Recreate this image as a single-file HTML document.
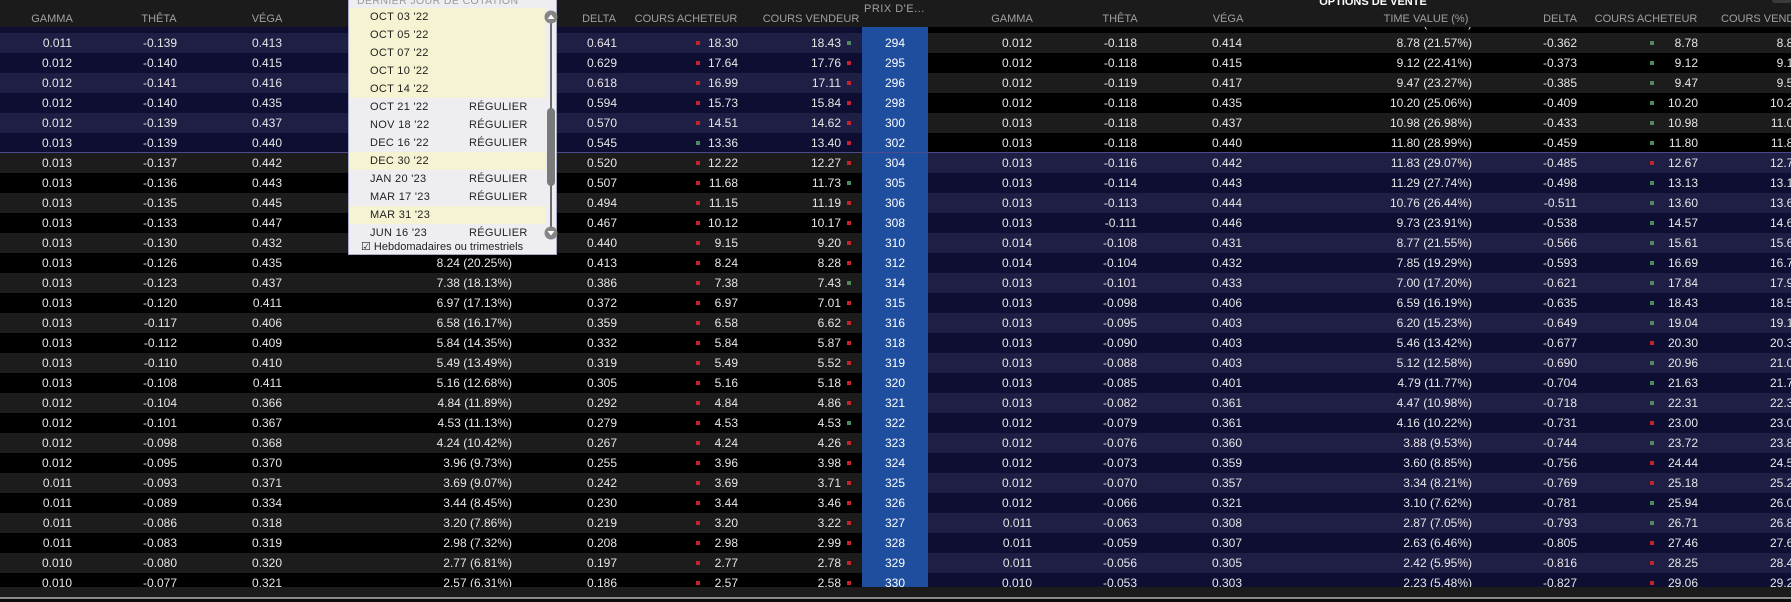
<!DOCTYPE html>
<html><head><meta charset="utf-8"><style>
*{margin:0;padding:0;box-sizing:border-box}
body{width:1791px;height:602px;background:#0a0a0a;overflow:hidden;position:relative;font-family:"Liberation Sans",Arial,sans-serif;color:#e6e6e6}
#rows{position:absolute;left:0;top:0;width:1791px;height:587px;overflow:hidden}
.r{position:absolute;left:0;width:1791px;height:20px;font-size:12px;line-height:20px}
.r span{position:absolute;white-space:nowrap}
.L{position:absolute;left:0;width:862px;height:20px}
.R{position:absolute;left:928px;width:863px;height:20px}
.a{right:1719px}.b{right:1614px}.c{right:1509px}.d{right:1279px}.e{right:1174px}.f{right:1053px}.g{right:950px}
.h{right:759px}.i{right:654px}.j{right:549px}.k{right:319px}.l{right:214px}.m{right:93px}.n{right:-9px}
.s{left:862px;width:66px;text-align:center;background:#1f4e9e;color:#fff}
i{position:absolute;width:4px;height:4px;top:8px}
.x{background:#c4222c}.y{background:#4d8a5e}
.q1{left:696px}.q2{left:847px}.q3{left:1650px}
.nv1{background:#1f1f46}.nv2{background:#0e0e33}.gr1{background:#1c1c1c}.gr2{background:#000}
#hdr{position:absolute;left:0;top:0;width:1791px;height:27px;background:#1b1b1b;z-index:2;font-size:11px;color:#a0a0a0}
#hdr span{position:absolute;top:13px;white-space:nowrap;transform:translateX(-50%)}
#blue{position:absolute;left:862px;top:27px;width:66px;height:560px;background:#1f4e9e}
#sep{position:absolute;left:0;top:152px;width:1791px;height:1px;background:#4a4a8c;z-index:1}
#dd{position:absolute;left:348px;top:-1px;width:209px;height:256px;background:#eeeef2;border:1px solid #a8aac8;z-index:3;color:#222;font-size:11px}
#dd .it{position:absolute;left:0;width:196px;height:18px;line-height:18px}
#dd .it b{font-weight:normal;position:absolute;left:21px;letter-spacing:.3px}
#dd .it u{text-decoration:none;position:absolute;left:120px;letter-spacing:.3px}
.ye{background:#f5f3d2}
</style></head><body>
<div id="rows">
<div id="blue"></div>
<div class="r" style="top:13px"><div class="L nv2"></div><div class="R gr2"></div><span class="a">0.011</span><span class="b">-0.138</span><span class="c">0.412</span><span class="e">0.653</span><span class="f">18.97</span><span class="g">19.11</span><span class="h">0.012</span><span class="i">-0.117</span><span class="j">0.412</span><span class="k">8.45 (20.76%)</span><span class="l">-0.349</span><span class="m">8.45</span></div>
<div class="r" style="top:33px"><div class="L nv1"></div><div class="R gr1"></div><span class="a">0.011</span><span class="b">-0.139</span><span class="c">0.413</span><span class="e">0.641</span><i class="x q1"></i><span class="f">18.30</span><span class="g">18.43</span><i class="y q2"></i><span class="s">294</span><span class="h">0.012</span><span class="i">-0.118</span><span class="j">0.414</span><span class="k">8.78 (21.57%)</span><span class="l">-0.362</span><i class="y q3"></i><span class="m">8.78</span><span class="n">8.83</span></div>
<div class="r" style="top:53px"><div class="L nv2"></div><div class="R gr2"></div><span class="a">0.012</span><span class="b">-0.140</span><span class="c">0.415</span><span class="e">0.629</span><i class="x q1"></i><span class="f">17.64</span><span class="g">17.76</span><i class="x q2"></i><span class="s">295</span><span class="h">0.012</span><span class="i">-0.118</span><span class="j">0.415</span><span class="k">9.12 (22.41%)</span><span class="l">-0.373</span><i class="y q3"></i><span class="m">9.12</span><span class="n">9.17</span></div>
<div class="r" style="top:73px"><div class="L nv1"></div><div class="R gr1"></div><span class="a">0.012</span><span class="b">-0.141</span><span class="c">0.416</span><span class="e">0.618</span><i class="x q1"></i><span class="f">16.99</span><span class="g">17.11</span><i class="x q2"></i><span class="s">296</span><span class="h">0.012</span><span class="i">-0.119</span><span class="j">0.417</span><span class="k">9.47 (23.27%)</span><span class="l">-0.385</span><i class="y q3"></i><span class="m">9.47</span><span class="n">9.52</span></div>
<div class="r" style="top:93px"><div class="L nv2"></div><div class="R gr2"></div><span class="a">0.012</span><span class="b">-0.140</span><span class="c">0.435</span><span class="e">0.594</span><i class="x q1"></i><span class="f">15.73</span><span class="g">15.84</span><i class="x q2"></i><span class="s">298</span><span class="h">0.012</span><span class="i">-0.118</span><span class="j">0.435</span><span class="k">10.20 (25.06%)</span><span class="l">-0.409</span><i class="y q3"></i><span class="m">10.20</span><span class="n">10.26</span></div>
<div class="r" style="top:113px"><div class="L nv1"></div><div class="R gr1"></div><span class="a">0.012</span><span class="b">-0.139</span><span class="c">0.437</span><span class="e">0.570</span><i class="x q1"></i><span class="f">14.51</span><span class="g">14.62</span><i class="x q2"></i><span class="s">300</span><span class="h">0.013</span><span class="i">-0.118</span><span class="j">0.437</span><span class="k">10.98 (26.98%)</span><span class="l">-0.433</span><i class="y q3"></i><span class="m">10.98</span><span class="n">11.04</span></div>
<div class="r" style="top:133px"><div class="L nv2"></div><div class="R gr2"></div><span class="a">0.013</span><span class="b">-0.139</span><span class="c">0.440</span><span class="e">0.545</span><i class="y q1"></i><span class="f">13.36</span><span class="g">13.40</span><i class="x q2"></i><span class="s">302</span><span class="h">0.013</span><span class="i">-0.118</span><span class="j">0.440</span><span class="k">11.80 (28.99%)</span><span class="l">-0.459</span><i class="y q3"></i><span class="m">11.80</span><span class="n">11.86</span></div>
<div class="r" style="top:153px"><div class="L gr1"></div><div class="R nv1"></div><span class="a">0.013</span><span class="b">-0.137</span><span class="c">0.442</span><span class="e">0.520</span><i class="x q1"></i><span class="f">12.22</span><span class="g">12.27</span><i class="x q2"></i><span class="s">304</span><span class="h">0.013</span><span class="i">-0.116</span><span class="j">0.442</span><span class="k">11.83 (29.07%)</span><span class="l">-0.485</span><i class="x q3"></i><span class="m">12.67</span><span class="n">12.73</span></div>
<div class="r" style="top:173px"><div class="L gr2"></div><div class="R nv2"></div><span class="a">0.013</span><span class="b">-0.136</span><span class="c">0.443</span><span class="e">0.507</span><i class="x q1"></i><span class="f">11.68</span><span class="g">11.73</span><i class="y q2"></i><span class="s">305</span><span class="h">0.013</span><span class="i">-0.114</span><span class="j">0.443</span><span class="k">11.29 (27.74%)</span><span class="l">-0.498</span><i class="y q3"></i><span class="m">13.13</span><span class="n">13.19</span></div>
<div class="r" style="top:193px"><div class="L gr1"></div><div class="R nv1"></div><span class="a">0.013</span><span class="b">-0.135</span><span class="c">0.445</span><span class="e">0.494</span><i class="x q1"></i><span class="f">11.15</span><span class="g">11.19</span><i class="x q2"></i><span class="s">306</span><span class="h">0.013</span><span class="i">-0.113</span><span class="j">0.444</span><span class="k">10.76 (26.44%)</span><span class="l">-0.511</span><i class="y q3"></i><span class="m">13.60</span><span class="n">13.66</span></div>
<div class="r" style="top:213px"><div class="L gr2"></div><div class="R nv2"></div><span class="a">0.013</span><span class="b">-0.133</span><span class="c">0.447</span><span class="e">0.467</span><i class="x q1"></i><span class="f">10.12</span><span class="g">10.17</span><i class="x q2"></i><span class="s">308</span><span class="h">0.013</span><span class="i">-0.111</span><span class="j">0.446</span><span class="k">9.73 (23.91%)</span><span class="l">-0.538</span><i class="y q3"></i><span class="m">14.57</span><span class="n">14.63</span></div>
<div class="r" style="top:233px"><div class="L gr1"></div><div class="R nv1"></div><span class="a">0.013</span><span class="b">-0.130</span><span class="c">0.432</span><span class="d">9.15 (22.49%)</span><span class="e">0.440</span><i class="x q1"></i><span class="f">9.15</span><span class="g">9.20</span><i class="x q2"></i><span class="s">310</span><span class="h">0.014</span><span class="i">-0.108</span><span class="j">0.431</span><span class="k">8.77 (21.55%)</span><span class="l">-0.566</span><i class="y q3"></i><span class="m">15.61</span><span class="n">15.67</span></div>
<div class="r" style="top:253px"><div class="L gr2"></div><div class="R nv2"></div><span class="a">0.013</span><span class="b">-0.126</span><span class="c">0.435</span><span class="d">8.24 (20.25%)</span><span class="e">0.413</span><i class="x q1"></i><span class="f">8.24</span><span class="g">8.28</span><i class="x q2"></i><span class="s">312</span><span class="h">0.014</span><span class="i">-0.104</span><span class="j">0.432</span><span class="k">7.85 (19.29%)</span><span class="l">-0.593</span><i class="y q3"></i><span class="m">16.69</span><span class="n">16.75</span></div>
<div class="r" style="top:273px"><div class="L gr1"></div><div class="R nv1"></div><span class="a">0.013</span><span class="b">-0.123</span><span class="c">0.437</span><span class="d">7.38 (18.13%)</span><span class="e">0.386</span><i class="x q1"></i><span class="f">7.38</span><span class="g">7.43</span><i class="y q2"></i><span class="s">314</span><span class="h">0.013</span><span class="i">-0.101</span><span class="j">0.433</span><span class="k">7.00 (17.20%)</span><span class="l">-0.621</span><i class="y q3"></i><span class="m">17.84</span><span class="n">17.90</span></div>
<div class="r" style="top:293px"><div class="L gr2"></div><div class="R nv2"></div><span class="a">0.013</span><span class="b">-0.120</span><span class="c">0.411</span><span class="d">6.97 (17.13%)</span><span class="e">0.372</span><i class="x q1"></i><span class="f">6.97</span><span class="g">7.01</span><i class="x q2"></i><span class="s">315</span><span class="h">0.013</span><span class="i">-0.098</span><span class="j">0.406</span><span class="k">6.59 (16.19%)</span><span class="l">-0.635</span><i class="y q3"></i><span class="m">18.43</span><span class="n">18.50</span></div>
<div class="r" style="top:313px"><div class="L gr1"></div><div class="R nv1"></div><span class="a">0.013</span><span class="b">-0.117</span><span class="c">0.406</span><span class="d">6.58 (16.17%)</span><span class="e">0.359</span><i class="x q1"></i><span class="f">6.58</span><span class="g">6.62</span><i class="x q2"></i><span class="s">316</span><span class="h">0.013</span><span class="i">-0.095</span><span class="j">0.403</span><span class="k">6.20 (15.23%)</span><span class="l">-0.649</span><i class="y q3"></i><span class="m">19.04</span><span class="n">19.10</span></div>
<div class="r" style="top:333px"><div class="L gr2"></div><div class="R nv2"></div><span class="a">0.013</span><span class="b">-0.112</span><span class="c">0.409</span><span class="d">5.84 (14.35%)</span><span class="e">0.332</span><i class="x q1"></i><span class="f">5.84</span><span class="g">5.87</span><i class="x q2"></i><span class="s">318</span><span class="h">0.013</span><span class="i">-0.090</span><span class="j">0.403</span><span class="k">5.46 (13.42%)</span><span class="l">-0.677</span><i class="x q3"></i><span class="m">20.30</span><span class="n">20.36</span></div>
<div class="r" style="top:353px"><div class="L gr1"></div><div class="R nv1"></div><span class="a">0.013</span><span class="b">-0.110</span><span class="c">0.410</span><span class="d">5.49 (13.49%)</span><span class="e">0.319</span><i class="x q1"></i><span class="f">5.49</span><span class="g">5.52</span><i class="x q2"></i><span class="s">319</span><span class="h">0.013</span><span class="i">-0.088</span><span class="j">0.403</span><span class="k">5.12 (12.58%)</span><span class="l">-0.690</span><i class="y q3"></i><span class="m">20.96</span><span class="n">21.03</span></div>
<div class="r" style="top:373px"><div class="L gr2"></div><div class="R nv2"></div><span class="a">0.013</span><span class="b">-0.108</span><span class="c">0.411</span><span class="d">5.16 (12.68%)</span><span class="e">0.305</span><i class="x q1"></i><span class="f">5.16</span><span class="g">5.18</span><i class="x q2"></i><span class="s">320</span><span class="h">0.013</span><span class="i">-0.085</span><span class="j">0.401</span><span class="k">4.79 (11.77%)</span><span class="l">-0.704</span><i class="y q3"></i><span class="m">21.63</span><span class="n">21.70</span></div>
<div class="r" style="top:393px"><div class="L gr1"></div><div class="R nv1"></div><span class="a">0.012</span><span class="b">-0.104</span><span class="c">0.366</span><span class="d">4.84 (11.89%)</span><span class="e">0.292</span><i class="x q1"></i><span class="f">4.84</span><span class="g">4.86</span><i class="x q2"></i><span class="s">321</span><span class="h">0.013</span><span class="i">-0.082</span><span class="j">0.361</span><span class="k">4.47 (10.98%)</span><span class="l">-0.718</span><i class="y q3"></i><span class="m">22.31</span><span class="n">22.38</span></div>
<div class="r" style="top:413px"><div class="L gr2"></div><div class="R nv2"></div><span class="a">0.012</span><span class="b">-0.101</span><span class="c">0.367</span><span class="d">4.53 (11.13%)</span><span class="e">0.279</span><i class="x q1"></i><span class="f">4.53</span><span class="g">4.53</span><i class="y q2"></i><span class="s">322</span><span class="h">0.012</span><span class="i">-0.079</span><span class="j">0.361</span><span class="k">4.16 (10.22%)</span><span class="l">-0.731</span><i class="x q3"></i><span class="m">23.00</span><span class="n">23.07</span></div>
<div class="r" style="top:433px"><div class="L gr1"></div><div class="R nv1"></div><span class="a">0.012</span><span class="b">-0.098</span><span class="c">0.368</span><span class="d">4.24 (10.42%)</span><span class="e">0.267</span><i class="x q1"></i><span class="f">4.24</span><span class="g">4.26</span><i class="x q2"></i><span class="s">323</span><span class="h">0.012</span><span class="i">-0.076</span><span class="j">0.360</span><span class="k">3.88 (9.53%)</span><span class="l">-0.744</span><i class="y q3"></i><span class="m">23.72</span><span class="n">23.80</span></div>
<div class="r" style="top:453px"><div class="L gr2"></div><div class="R nv2"></div><span class="a">0.012</span><span class="b">-0.095</span><span class="c">0.370</span><span class="d">3.96 (9.73%)</span><span class="e">0.255</span><i class="x q1"></i><span class="f">3.96</span><span class="g">3.98</span><i class="x q2"></i><span class="s">324</span><span class="h">0.012</span><span class="i">-0.073</span><span class="j">0.359</span><span class="k">3.60 (8.85%)</span><span class="l">-0.756</span><i class="x q3"></i><span class="m">24.44</span><span class="n">24.52</span></div>
<div class="r" style="top:473px"><div class="L gr1"></div><div class="R nv1"></div><span class="a">0.011</span><span class="b">-0.093</span><span class="c">0.371</span><span class="d">3.69 (9.07%)</span><span class="e">0.242</span><i class="x q1"></i><span class="f">3.69</span><span class="g">3.71</span><i class="x q2"></i><span class="s">325</span><span class="h">0.012</span><span class="i">-0.070</span><span class="j">0.357</span><span class="k">3.34 (8.21%)</span><span class="l">-0.769</span><i class="x q3"></i><span class="m">25.18</span><span class="n">25.26</span></div>
<div class="r" style="top:493px"><div class="L gr2"></div><div class="R nv2"></div><span class="a">0.011</span><span class="b">-0.089</span><span class="c">0.334</span><span class="d">3.44 (8.45%)</span><span class="e">0.230</span><i class="x q1"></i><span class="f">3.44</span><span class="g">3.46</span><i class="x q2"></i><span class="s">326</span><span class="h">0.012</span><span class="i">-0.066</span><span class="j">0.321</span><span class="k">3.10 (7.62%)</span><span class="l">-0.781</span><i class="y q3"></i><span class="m">25.94</span><span class="n">26.02</span></div>
<div class="r" style="top:513px"><div class="L gr1"></div><div class="R nv1"></div><span class="a">0.011</span><span class="b">-0.086</span><span class="c">0.318</span><span class="d">3.20 (7.86%)</span><span class="e">0.219</span><i class="x q1"></i><span class="f">3.20</span><span class="g">3.22</span><i class="x q2"></i><span class="s">327</span><span class="h">0.011</span><span class="i">-0.063</span><span class="j">0.308</span><span class="k">2.87 (7.05%)</span><span class="l">-0.793</span><i class="y q3"></i><span class="m">26.71</span><span class="n">26.80</span></div>
<div class="r" style="top:533px"><div class="L gr2"></div><div class="R nv2"></div><span class="a">0.011</span><span class="b">-0.083</span><span class="c">0.319</span><span class="d">2.98 (7.32%)</span><span class="e">0.208</span><i class="x q1"></i><span class="f">2.98</span><span class="g">2.99</span><i class="x q2"></i><span class="s">328</span><span class="h">0.011</span><span class="i">-0.059</span><span class="j">0.307</span><span class="k">2.63 (6.46%)</span><span class="l">-0.805</span><i class="x q3"></i><span class="m">27.46</span><span class="n">27.60</span></div>
<div class="r" style="top:553px"><div class="L gr1"></div><div class="R nv1"></div><span class="a">0.010</span><span class="b">-0.080</span><span class="c">0.320</span><span class="d">2.77 (6.81%)</span><span class="e">0.197</span><i class="x q1"></i><span class="f">2.77</span><span class="g">2.78</span><i class="x q2"></i><span class="s">329</span><span class="h">0.011</span><span class="i">-0.056</span><span class="j">0.305</span><span class="k">2.42 (5.95%)</span><span class="l">-0.816</span><i class="x q3"></i><span class="m">28.25</span><span class="n">28.40</span></div>
<div class="r" style="top:573px"><div class="L gr2"></div><div class="R nv2"></div><span class="a">0.010</span><span class="b">-0.077</span><span class="c">0.321</span><span class="d">2.57 (6.31%)</span><span class="e">0.186</span><i class="x q1"></i><span class="f">2.57</span><span class="g">2.58</span><i class="x q2"></i><span class="s">330</span><span class="h">0.010</span><span class="i">-0.053</span><span class="j">0.303</span><span class="k">2.23 (5.48%)</span><span class="l">-0.827</span><i class="x q3"></i><span class="m">29.06</span><span class="n">29.20</span></div>
</div>
<div id="sep"></div>
<div style="position:absolute;left:0;top:587px;width:1791px;height:10px;background:#1c1c1c"></div>
<div style="position:absolute;left:0;top:597px;width:1791px;height:2px;background:#8a8a8a"></div>

<div id="hdr">
<span style="left:52px">GAMMA</span><span style="left:159px">THÊTA</span><span style="left:267px">VÉGA</span>
<span style="left:599px">DELTA</span><span style="left:686px">COURS ACHETEUR</span><span style="left:811px">COURS VENDEUR</span>
<span style="left:864px;top:3px;transform:none;letter-spacing:.5px">PRIX D'E...</span>
<span style="left:1012px">GAMMA</span><span style="left:1120px">THÊTA</span><span style="left:1228px">VÉGA</span><span style="left:1426px">TIME VALUE (%)</span>
<span style="left:1560px">DELTA</span><span style="left:1646px">COURS ACHETEUR</span><span style="left:1760px;transform:none;left:1721px">COURS VENDEUR</span>
<span style="left:1373px;top:-4px;color:#fff;font-weight:bold">OPTIONS DE VENTE</span>
<div style="position:absolute;left:1772px;top:-4px;width:20px;height:7px;border-radius:3px;background:#3a3a3a"></div>
</div>

<div id="dd">
<div style="position:absolute;left:8px;top:-5px;color:#999;font-size:10.5px;letter-spacing:.4px">DERNIER JOUR DE COTATION</div>
<div class="it ye" style="top:8px"><b>OCT 03 '22</b></div>
<div class="it ye" style="top:26px"><b>OCT 05 '22</b></div>
<div class="it ye" style="top:44px"><b>OCT 07 '22</b></div>
<div class="it ye" style="top:62px"><b>OCT 10 '22</b></div>
<div class="it ye" style="top:80px"><b>OCT 14 '22</b></div>
<div class="it" style="top:98px"><b>OCT 21 '22</b><u>RÉGULIER</u></div>
<div class="it" style="top:116px"><b>NOV 18 '22</b><u>RÉGULIER</u></div>
<div class="it" style="top:134px"><b>DEC 16 '22</b><u>RÉGULIER</u></div>
<div class="it ye" style="top:152px"><b>DEC 30 '22</b></div>
<div class="it" style="top:170px"><b>JAN 20 '23</b><u>RÉGULIER</u></div>
<div class="it" style="top:188px"><b>MAR 17 '23</b><u>RÉGULIER</u></div>
<div class="it ye" style="top:206px"><b>MAR 31 '23</b></div>
<div class="it" style="top:224px"><b>JUN 16 '23</b><u>RÉGULIER</u></div>
<div style="position:absolute;left:201px;top:22px;width:2px;height:205px;background:#6a6a6a"></div>
<div style="position:absolute;left:198px;top:108px;width:8px;height:78px;border-radius:4px;background:#7a7a7a"></div>
<svg style="position:absolute;left:195px;top:10px" width="14" height="14"><circle cx="7" cy="7" r="6.5" fill="#858585"/><path d="M3.5 9 L7 4.5 L10.5 9 Z" fill="#fff"/></svg>
<svg style="position:absolute;left:195px;top:226px" width="14" height="14"><circle cx="7" cy="7" r="6.5" fill="#858585"/><path d="M3.5 5 L7 9.5 L10.5 5 Z" fill="#fff"/></svg>
<div style="position:absolute;left:12px;top:240px;font-size:11px;color:#222;white-space:nowrap">☑ Hebdomadaires ou trimestriels</div>
</div>
</body></html>
